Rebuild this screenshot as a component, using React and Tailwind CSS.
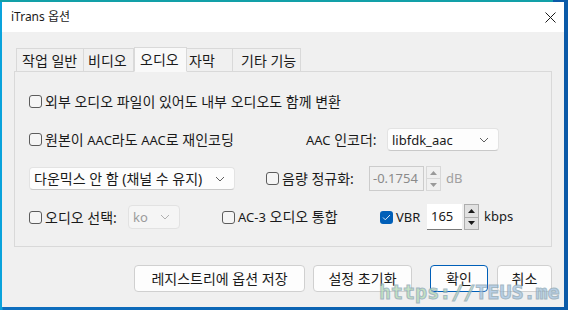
import React from 'react'

const font = "font-['Noto_Sans','Noto_Sans_CJK_KR',sans-serif]"

// Latin runs are set a bit smaller than the Hangul, as in Malgun/Segoe UI
const L = ({ children }) => <span className="text-[13px]">{children}</span>

const Chevron = ({ color = '#5f5f5f' }) => (
  <svg width="10" height="6" viewBox="0 0 10 6" fill="none">
    <path d="M1 1l4 4 4-4" stroke={color} strokeWidth="1" />
  </svg>
)

const Checkbox = ({ checked, label, className = '' }) => (
  <div className={`flex items-center ${className}`}>
    {checked ? (
      <div className="w-[13px] h-[13px] rounded-[3px] bg-[#005fb8] flex items-center justify-center shrink-0">
        <svg width="9" height="7" viewBox="0 0 9 7" fill="none">
          <path d="M1 3.5l2.3 2.3L8 1" stroke="#dce9f7" strokeWidth="1" />
        </svg>
      </div>
    ) : (
      <div className="w-[13px] h-[13px] rounded-[3px] border border-[#5c5c5c] bg-[#f5f5f5] shrink-0" />
    )}
    <span className="ml-[3px] text-[14px] text-[#1a1a1a] whitespace-nowrap">{label}</span>
  </div>
)

const Select = ({ children, className = '', disabled }) => (
  <div
    className={`flex items-center justify-between rounded-[4px] border ${
      disabled
        ? 'border-[#e2e2e2] bg-[#f5f5f5] text-[#9b9b9b]'
        : 'border-[#e3e3e3] border-b-[#c9c9c9] bg-[#fdfdfd] text-[#1a1a1a]'
    } pl-[4px] pr-[9px] text-[14px] ${className}`}
  >
    <span className="whitespace-nowrap">{children}</span>
    <Chevron color={disabled ? '#b0b0b0' : '#5f5f5f'} />
  </div>
)

const Arrow = ({ up, color }) => (
  <svg width="7" height="4" viewBox="0 0 7 4">
    <path d={up ? 'M0 4L3.5 0 7 4z' : 'M0 0L3.5 4 7 0z'} fill={color} />
  </svg>
)

const Spin = ({ disabled, className = '' }) => {
  const border = disabled ? 'border-[#d8d8d8]' : 'border-[#adadad]'
  const bg = disabled ? 'bg-[#f0f0f0]' : 'bg-[#e1e1e1]'
  const color = disabled ? '#9a9a9a' : '#1a1a1a'
  return (
    <div className={`flex flex-col w-[15px] ${className}`}>
      <div className={`flex-1 flex items-center justify-center border ${border} ${bg}`}>
        <Arrow up color={color} />
      </div>
      <div className={`flex-1 flex items-center justify-center border border-t-0 ${border} ${bg}`}>
        <Arrow color={color} />
      </div>
    </div>
  )
}

const Button = ({ children, primary, className = '' }) => (
  <div
    className={`h-[27px] flex items-center justify-center rounded-[4px] border bg-[#fdfdfd] text-[14px] text-[#1a1a1a] ${
      primary ? 'border-[#005fb8]' : 'border-[#d0d0d0]'
    } ${className}`}
  >
    {children}
  </div>
)

const Tab = ({ label, active, className = '' }) => (
  <div
    className={`flex items-center text-[14px] text-[#1a1a1a] border border-[#d9d9d9] ${
      active ? 'h-[25px] bg-[#f9f9f9] border-b-[#f9f9f9] -mb-px z-10' : 'h-[23px] bg-[#f0f0f0] border-b-0'
    } ${className}`}
  >
    {label}
  </div>
)

export default function App() {
  return (
    <div
      className={`${font} w-[568px] h-[310px] pt-[2px] pl-[2px] pr-[4px] pb-[3px] bg-[linear-gradient(90deg,#0aa3dc_0,#0aa3dc_2px,#0d6fbf_3px,#0b5aa8_100%)] relative overflow-hidden`}
    >
      <div className="h-[2px] -mt-[2px] -ml-[2px] w-[553px] bg-[#12a0a8]" />
      <div className="w-[562px] h-[305px] flex flex-col bg-[#f0f0f0]">
        {/* Title bar */}
        <div className="h-[30px] bg-white flex items-center justify-between pl-[9px] pr-[8px]">
          <span className="text-[12px] text-[#1a1a1a]">iTrans 옵션</span>
          <svg width="11" height="11" viewBox="0 0 11 11">
            <path d="M0.5 0.5l10 10M10.5 0.5l-10 10" stroke="#1a1a1a" strokeWidth="1" />
          </svg>
        </div>

        <div className="flex flex-col px-[12px] pt-[15px]">
          {/* Tabs */}
          <div className="flex items-end pl-[2px] h-[24px]">
            <Tab label="작업 일반" className="w-[68px] pl-[5px]" />
            <Tab label="비디오" className="w-[50px] pl-[4px] border-l-0" />
            <Tab label="오디오" active className="w-[53px] pl-[5px]" />
            <Tab label="자막" className="w-[46px] pl-[2px] border-l-0" />
            <Tab label="기타 기능" className="w-[68px] pl-[8px] border-l-0" />
          </div>

          {/* Panel */}
          <div className="h-[176px] border border-[#d9d9d9] bg-[#f0f0f0] pl-[14px] pt-[17px] flex flex-col">
            <div className="h-[24px] flex items-center">
              <Checkbox label="외부 오디오 파일이 있어도 내부 오디오도 함께 변환" />
            </div>

            <div className="h-[23px] mt-[15px] flex items-center">
              <Checkbox
                label={<>원본이 <L>AAC</L>라도 <L>AAC</L>로 재인코딩</>}
                className="w-[277px]"
              />
              <span className="text-[14px] text-[#1a1a1a] w-[81px] whitespace-nowrap">
                <L>AAC</L> 인코더:
              </span>
              <Select className="w-[112px] h-[23px]"><L>libfdk_aac</L></Select>
            </div>

            <div className="h-[25px] mt-[15px] flex items-center">
              <Select className="w-[206px] h-[23px]">다운믹스 안 함 (채널 수 유지)</Select>
              <Checkbox label="음량 정규화:" className="ml-[31px] w-[103px]" />
              <div className="w-[55px] h-[25px] border border-[#cccccc] bg-[#f0f0f0] flex items-center pl-[3px] text-[13px] text-[#8a8a8a]">
                -0.1754
              </div>
              <Spin disabled className="h-[25px] ml-[2px]" />
              <span className="ml-[5px] text-[13px] text-[#a0a0a0]">dB</span>
            </div>

            <div className="h-[26px] mt-[13px] flex items-center">
              <Checkbox label="오디오 선택:" className="w-[99px]" />
              <Select disabled className="w-[52px] h-[24px]"><L>ko</L></Select>
              <Checkbox label={<><L>AC-3</L> 오디오 통합</>} className="ml-[42px] w-[158px]" />
              <Checkbox checked label={<L>VBR</L>} className="w-[47px]" />
              <div className="w-[35px] h-[26px] bg-white border-b border-[#7a7a7a] flex items-center pl-[4px] text-[13px] text-[#1a1a1a]">
                165
              </div>
              <Spin className="h-[26px] ml-[2px]" />
              <span className="ml-[5px] text-[13px] text-[#1a1a1a]">kbps</span>
            </div>
          </div>

          {/* Buttons */}
          <div className="flex justify-end mt-[18px]">
            <Button className="w-[171px]">레지스트리에 옵션 저장</Button>
            <Button className="w-[99px] ml-[8px]">설정 초기화</Button>
            <Button primary className="w-[58px] ml-[18px]">확인</Button>
            <Button className="w-[55px] ml-[9px]">취소</Button>
          </div>
        </div>
      </div>

      {/* Watermark */}
      <div className="absolute left-[379px] top-[280px] font-['DejaVu_Sans_Mono',monospace] font-bold text-[20px] leading-[24px] whitespace-nowrap opacity-75 [-webkit-text-stroke:1px_#8aa5b3]">
        <span className="text-[#b3dcb0]">https://</span>
        <span className="text-[#a4c4e4]">TEUS.me</span>
      </div>
    </div>
  )
}
